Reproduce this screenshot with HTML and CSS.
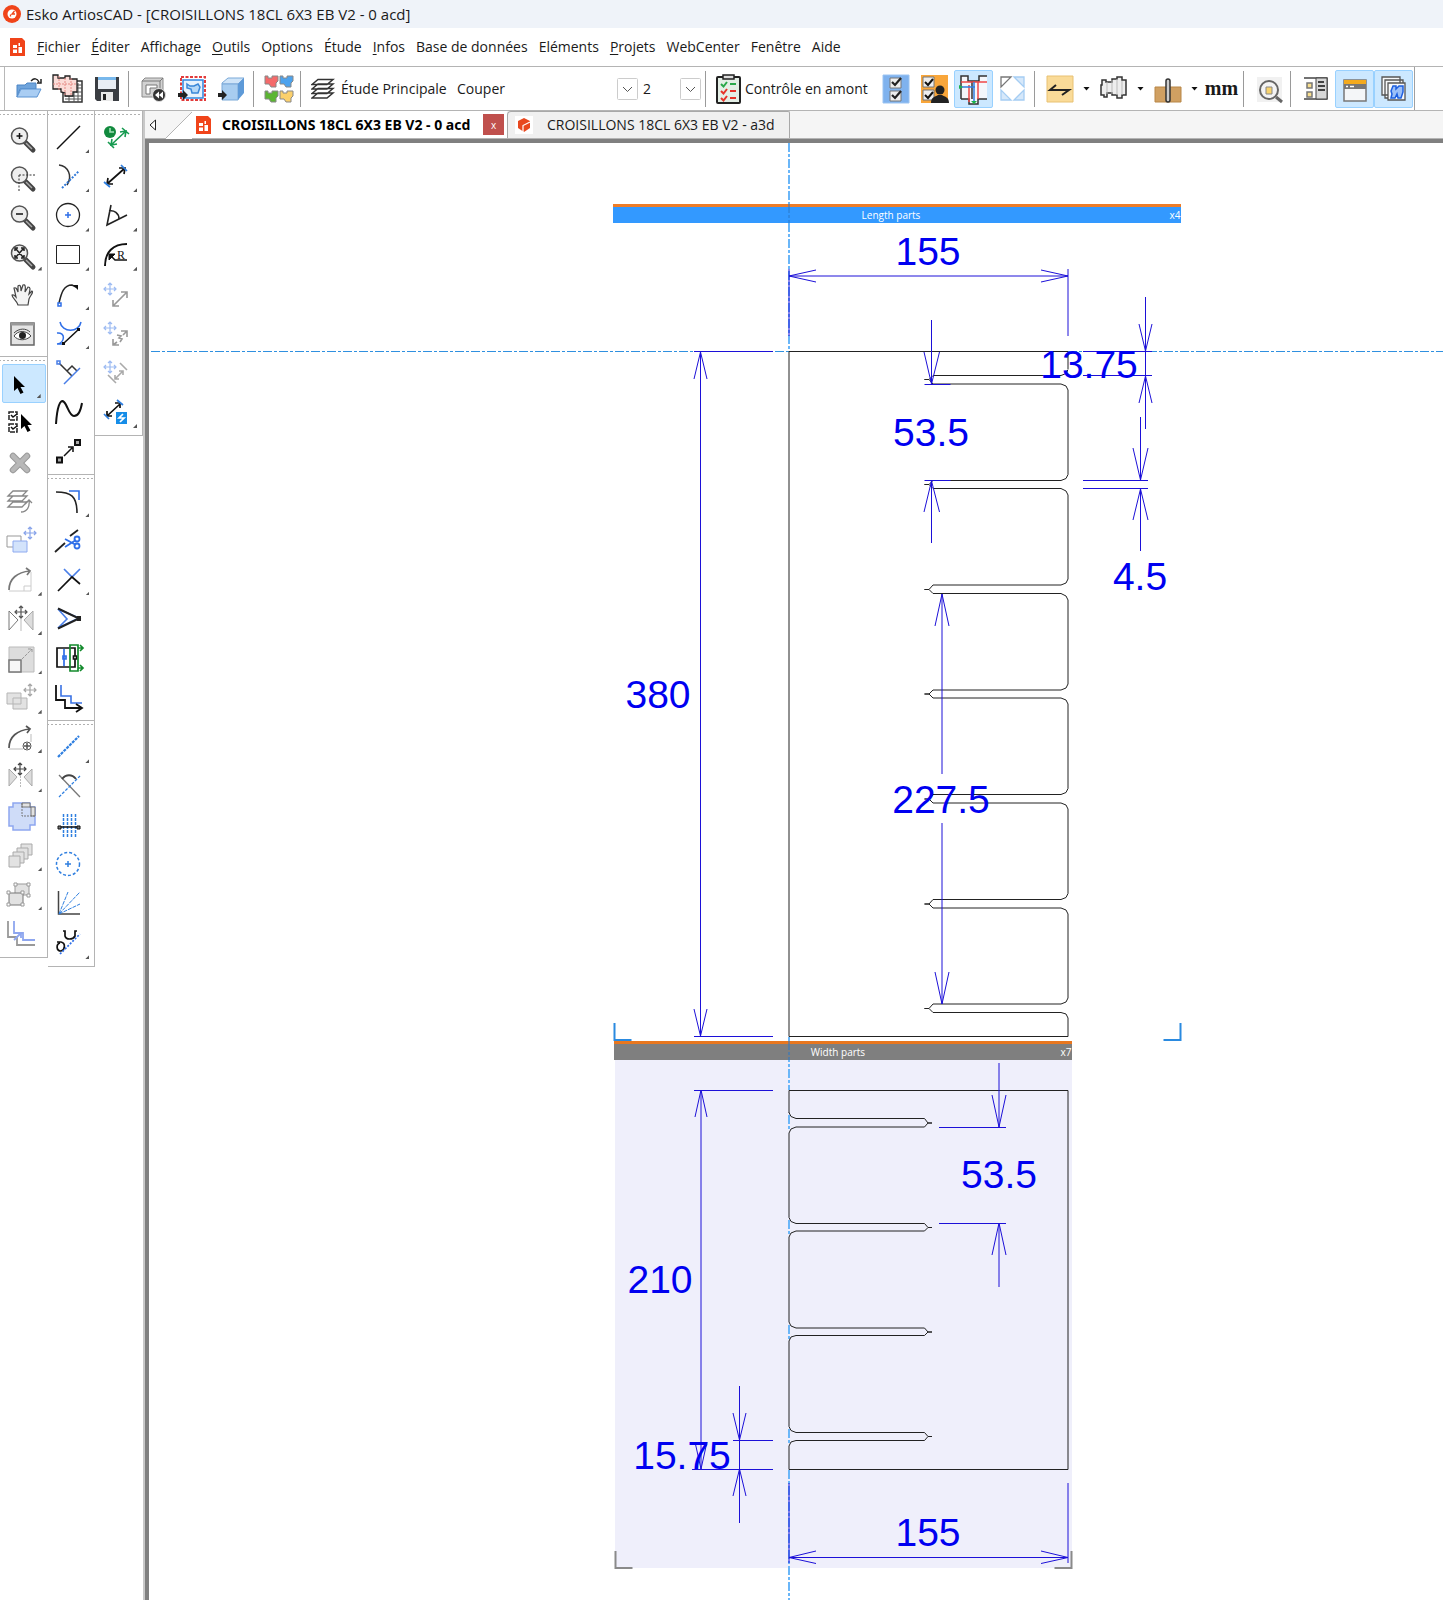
FILE: index.html
```html
<!DOCTYPE html>
<html lang="fr">
<head>
<meta charset="utf-8">
<meta name="viewport" content="width=device-width, initial-scale=1">
<title>Esko ArtiosCAD - [CROISILLONS 18CL 6X3 EB V2 - 0 acd]</title>
<link rel="stylesheet" href="styles.css">
</head>
<body>
<svg class="defs" aria-hidden="true">
  <defs>
    <g id="lens"><path d="M20 20l8 8" stroke="#444" stroke-width="5" stroke-linecap="round"/><path d="M21 21l6 6" stroke="#aaa" stroke-width="1.5"/><circle cx="14.500" cy="14" r="8" fill="#eee" stroke="#555" stroke-width="1.5"/></g>
    <g id="move" fill="none" stroke="currentColor" stroke-width="1.200"><path d="M-6 0H6M0-6V6M-4-2l-2 2 2 2M4-2l2 2-2 2M-2-4l2-2 2 2M-2 4l2 2 2-2"/></g>
    <path id="pointer" d="M0 0v15l3.500-3 3 6 3-1.500-3-5.500H11z" fill="#000"/>
    <g id="doc"><path d="M0 0h12l3 3v15H0z" fill="#f0441a"/><path d="M3 7h4v3H3zM3 11.500h4v3.500H3zM8.500 9H12v6H8.500zM8.500 5H10v3H8.500z" fill="#fff"/></g>
    <path id="piece" d="M0 0h3v2h4V0h6v5l-2 2v4H6L4 8H0z"/>
  </defs>
</svg>

<header class="titlebar">
  <svg class="logo" viewBox="0 0 18 18" aria-hidden="true"><circle cx="9" cy="9" r="9" fill="#f0441a"/><circle cx="9" cy="9" r="4.500" fill="#fff"/><path d="M11.500 6L9 9h3M7.500 9.500v2" stroke="#f0441a" stroke-width="1.300" fill="none"/></svg>
  <h1>Esko ArtiosCAD - [CROISILLONS 18CL 6X3 EB V2 - 0 acd]</h1>
</header>

<nav class="menu">
  <svg class="docicon" viewBox="0 0 15 18" aria-hidden="true"><use href="#doc"/></svg>
  <button><u>F</u>ichier</button><button><u>É</u>diter</button><button>Affichage</button><button><u>O</u>utils</button><button>Options</button><button>Étude</button><button><u>I</u>nfos</button><button>Base de données</button><button>Eléments</button><button><u>P</u>rojets</button><button>WebCenter</button><button>Fenêtre</button><button>Aide</button>
</nav>

<div class="toolbar-row"><div class="toolbar">
  <button class="tb" aria-label="Ouvrir"><svg viewBox="0 0 32 32"><path d="M4 12h8l2-2h9v6H7L4 24z" fill="#6fa4dc" stroke="#4c86c6"/><path d="M8 16h20l-4 8H4z" fill="#a9cdf3" stroke="#5b93d2"/><path d="M18 8c3-3 6-3 8 1m2-3v4h-4" fill="none" stroke="#222" stroke-width="1.500"/></svg></button>
  <button class="tb" aria-label="Modèle"><svg viewBox="0 0 32 32"><path d="M11 8h19v21H11z" fill="#fff" stroke="#333" stroke-width="1.500"/><path d="M13 23h17M13 26h17M17 10v19M22 10v19M26 10v19M24 12h6M24 15h6M24 19h6" stroke="#555"/><path d="M1 6V2h5v3h7V3h5v3h7v13h-4v4h-8v-3l-4-1v-3H1z" fill="#fbdcd8" stroke="#222" stroke-width="1.300"/><path d="M1 11h24M7 3v15M13 5v17M19 5v17" stroke="#e58a84" stroke-dasharray="2 1"/></svg></button>
  <button class="tb" aria-label="Enregistrer"><svg viewBox="0 0 32 32"><path d="M4 4h24v24H6l-2-2z" fill="#3a3d42"/><path d="M7 4h18v12H7z" fill="#e9eef4"/><path d="M7 4h18v3H7z" fill="#78b8ec"/><path d="M10 19h12v9H10z" fill="#e9e9e9"/><path d="M12 21h3v6h-3z" fill="#222"/></svg></button>
  <i class="sep"></i>
  <button class="tb" aria-label="Reconstruire"><svg viewBox="0 0 32 32"><path d="M4 8l3-3h18v16l-3 3H4z" fill="#d2d2d2" stroke="#8b8b8b"/><path d="M4 8h18v16M22 8l3-3" fill="none" stroke="#777"/><path d="M8 12h11v3H12v6H8z" fill="#fff" stroke="#777"/><circle cx="21" cy="22" r="6.500" fill="#333" stroke="#ddd"/><path d="M21 18.500v7l-4-3.500zM25 18.500v7l-4-3.500z" fill="#fff"/></svg></button>
  <button class="tb" aria-label="Vers le plan"><svg viewBox="0 0 32 32"><path d="M4 4h24v23H4z" fill="#fff" stroke="#e23b3b" stroke-width="2" stroke-dasharray="3 1.500"/><path d="M6 7h20v18H6z" fill="#e8f2fd" stroke="#2f86e0" stroke-width="1.500"/><path d="M10 11l3 2h4l4-2 2 3-2 6h-6l-1-4-4-1z" fill="#b5d7f7" stroke="#3a87d8" stroke-width="1.500"/><path d="M1 20h5v-3l5 5-5 5v-3H1z" fill="#222"/></svg></button>
  <button class="tb" aria-label="Vers la 3D"><svg viewBox="0 0 32 32"><path d="M6 10l6-5h16l-6 6H6z" fill="#cfe4f8" stroke="#7aa9d8"/><path d="M6 11h16v16H6z" fill="#a8cdf0" stroke="#7aa9d8"/><path d="M22 11l6-6v15l-6 7z" fill="#5e9ad8"/><path d="M2 20h4v-3l5 5-5 5v-3H2z" fill="#222"/></svg></button>
  <i class="sep"></i>
  <button class="tb" aria-label="Pièces"><svg viewBox="0 0 32 32" stroke="#888" stroke-width="1"><use href="#piece" x="2" y="3" fill="#f46a6a"/><use href="#piece" x="17" y="3" fill="#4da3ee"/><use href="#piece" x="2" y="18" fill="#5bb532"/><use href="#piece" x="17" y="18" fill="#fbd06c"/></svg></button>
  <i class="sep"></i>
  <button class="tbtext study"><svg viewBox="0 0 24 24" fill="#fff" stroke="#333" stroke-width="1.500"><path d="M1 21l6-5h15l-6 5zM1 16.500l6-5h15l-6 5zM1 12l6-5h15l-6 5zM1 7.500l6-5h15l-6 5z"/></svg>Étude Principale</button>
  <select class="combo kind" aria-label="Type de trait"><option>Couper</option></select>
  <select class="combo weight" aria-label="Épaisseur"><option>2</option></select>
  <i class="sep"></i>
  <button class="tbtext check"><svg viewBox="0 0 25 32"><rect x="1" y="4" width="23" height="26" rx="1" fill="#e4efe6" stroke="#222" stroke-width="2"/><path d="M7 2h11v4H7z" fill="#ddd" stroke="#222" stroke-width="1.500"/><path d="M5 11l2.500 2.500L11 9M14 11h6" fill="none" stroke="#2aa84a" stroke-width="2"/><path d="M5 18l2.500 2.500L11 16M14 18h6M5 25l2.500 2.500L11 23M14 25h6" fill="none" stroke="#e63329" stroke-width="2"/></svg>Contrôle en amont</button>
  <button class="tb" aria-label="Vérifications"><svg viewBox="0 0 32 32"><path d="M3 2h26v28H3z" fill="#7fb2ee" stroke="#9cc4f2"/><path d="M10 5h11v10H10zM10 18h11v10H10z" fill="#eee" stroke="#777"/><path d="M12 9l3 3 6-7M12 22l3 3 6-7" fill="none" stroke="#222" stroke-width="2.200"/></svg></button>
  <button class="tb" aria-label="Vérifications utilisateur"><svg viewBox="0 0 32 32"><path d="M2 2h27v28H2z" fill="#f9a63a"/><path d="M4 4h11v10H4zM4 17h11v10H4z" fill="#eee" stroke="#777"/><path d="M6 9l3 3 5-6M6 22l3 3 5-6" fill="none" stroke="#111" stroke-width="2"/><circle cx="21" cy="17" r="4.500" fill="#222"/><path d="M12 30c0-6 4-6 7-8h4c3 2 7 2 7 8z" fill="#222"/></svg></button>
  <button class="tb on" aria-label="Plan"><svg viewBox="0 0 32 32" fill="none"><path d="M3 3h7v5h11V3h8v23h-8v5h-9v-5H3z" fill="#f4f7fb"/><path d="M3 26V3h7v5h11V3h8M3 26h8v5h9v-5h9M14 8v18" stroke="#333" stroke-width="1.500"/><path d="M3 9h26M11 12v17M20 9v17" stroke="#ee4848" stroke-width="1.500"/><path d="M3 14h14M16 9v20" stroke="#2f7fe0" stroke-width="1.500"/><path d="M1 12l4 2-4 2zM13 28h6l-3 3z" fill="#19b24b"/></svg></button>
  <button class="tb" aria-label="Ajuster"><svg viewBox="0 0 32 32" stroke-width="1.300"><path d="M4 4h10L4 14z" fill="#fff" stroke="#777"/><path d="M17 4h10v10zM4 17v10h10zM27 17v10H17z" fill="#d6e8fa" stroke="#a5cdf3"/></svg></button>
  <i class="sep"></i>
  <button class="tb" aria-label="Sens"><svg viewBox="0 0 32 32"><path d="M3 3h26v26H3z" fill="#fadb98" stroke="#e8c172"/><path d="M12 12l-6 5h19l-7 5" fill="none" stroke="#222" stroke-width="2"/></svg></button><i class="drop"></i>
  <button class="tb" aria-label="Forme"><svg viewBox="0 0 32 32"><path d="M4 7h4v2h6V6h5V4h5v3h4v15h-4v3h-5v-3h-5v-2H9v4H6v-2H3V12h1z" fill="#eee" stroke="#333" stroke-width="1.500"/><path d="M9 9v12M14 7v14M19 6v16M24 8v14" stroke="#bbb"/></svg></button><i class="drop"></i>
  <button class="tb" aria-label="Règle"><svg viewBox="0 0 32 32"><path d="M3 14h26v15H3z" fill="#d0a062" stroke="#b88647"/><rect x="14" y="6" width="4" height="23" rx="2" fill="#ccc" stroke="#333" stroke-width="1.500"/></svg></button><i class="drop"></i>
  <button class="tb units">mm</button>
  <i class="sep"></i>
  <button class="tb" aria-label="Zoom objet"><svg viewBox="0 0 32 32"><path d="M4 4h25v25H4z" fill="#f1f1f1"/><path d="M23 24l6 5" stroke="#666" stroke-width="3"/><circle cx="16" cy="17" r="9" fill="#f4f4f4" stroke="#666" stroke-width="2"/><path d="M13 14h6v7h-6z" fill="#f8d36e" stroke="#888"/></svg></button>
  <i class="sep"></i>
  <button class="tb" aria-label="Panneau"><svg viewBox="0 0 32 32"><path d="M4 5h23v21H4" fill="#fff" stroke="#444" stroke-width="1.500"/><path d="M16 5h11v21H16z" fill="#d7d7d7" stroke="#444"/><path d="M7 10h5v5H7zM7 19h5v5H7z" fill="#f9df8e" stroke="#777" stroke-width="1.500"/><path d="M18 9h6M18 13h7M18 17h7" stroke="#111" stroke-width="1.700"/></svg></button>
  <button class="tb on" aria-label="Fenêtre"><svg viewBox="0 0 32 32"><path d="M5 7h22v21H5z" fill="#f4f6f8" stroke="#777" stroke-width="1.500"/><path d="M5 7h22v4H5z" fill="#f3aa1e"/><path d="M5 11h22v5H5z" fill="#777"/><path d="M7 13.500h2M11 13.500h4" stroke="#fff" stroke-width="1.500"/></svg></button>
  <button class="tb on" aria-label="Calques"><svg viewBox="0 0 32 32" fill="#f7f9fb" stroke="#555" stroke-width="1.300"><path d="M4 4h18v18H4zM7 7h18v18H7z"/><path d="M10 10h17v17H10z"/><path d="M13 18l2-5h3v3l3-3h4v6l-2 6h-3l-1-4-2 4h-4l1-4z" fill="#9cc0f8" stroke="#1d5fe0" stroke-width="1.500"/></svg></button>
</div></div>

<div class="workspace">
  <aside class="palettes">
    <div class="palette">
      <div class="group g6">
        <button aria-label="Zoom avant"><svg viewBox="0 0 32 32"><use href="#lens"/><path d="M11.500 14h6M14.500 11v6" stroke="#111" stroke-width="1.500"/></svg></button>
        <button aria-label="Zoom fenêtre"><svg viewBox="0 0 32 32"><use href="#lens"/><path d="M14 14h17M14 14v17" stroke="#333" stroke-dasharray="2 1.500"/></svg></button>
        <button aria-label="Zoom arrière"><svg viewBox="0 0 32 32"><use href="#lens"/><path d="M11 14h7" stroke="#111" stroke-width="1.500"/></svg></button>
        <button class="more" aria-label="Zoom étendu"><svg viewBox="0 0 32 32"><use href="#lens"/><path d="M11 10l7 8M18 10l-7 8M10 12v-3h3M16 9h3v3M10 16v3h3M16 19h3v-3" fill="none" stroke="#222" stroke-width="1.500"/></svg></button>
        <button aria-label="Main"><svg viewBox="0 0 32 32"><path d="M13 27c-1-4-6-7-6-10 2-1 3 1 4 2L9 10c2-1 3 1 4 4l0-6c2-2 3 0 3 5l2-6c2-1 3 1 2 7l3-5c3 0 2 3 1 7l3-3c2 1-2 5-3 8l-1 6z" fill="#f4f4f4" stroke="#444" stroke-width="1.200"/></svg></button>
        <button aria-label="Aperçu"><svg viewBox="0 0 32 32"><path d="M6 6h23v22H6z" fill="#e4e4e4" stroke="#666" stroke-width="1.500"/><path d="M6 7h23" stroke="#999" stroke-width="3"/><path d="M9 19c4-6 12-6 17 0-5 5-13 5-17 0z" fill="#fff" stroke="#444"/><path d="M9 16c5-5 12-5 16-1" fill="none" stroke="#444"/><circle cx="17.500" cy="18.500" r="3.500" fill="#222"/></svg></button>
      </div>
      <div class="group g15">
        <button class="more on" aria-label="Sélection"><svg viewBox="0 0 32 32"><use href="#pointer" x="9" y="8"/></svg></button>
        <button aria-label="Sélection multiple"><svg viewBox="0 0 32 32"><path d="M4 5h8v8H4zM4 17h8v8H4z" fill="#fff" stroke="#222" stroke-width="1.500" stroke-dasharray="5 1"/><path d="M6 8l2 2 4-3M6 20l2 2 4-3" fill="none" stroke="#111" stroke-width="1.500"/><use href="#pointer" x="16" y="7"/></svg></button>
        <button aria-label="Supprimer"><svg viewBox="0 0 32 32"><path d="M8 10l14 14M22 10L8 24" stroke="#999" stroke-width="6.500" stroke-linecap="round"/><path d="M8 10l14 14M22 10L8 24" stroke="#b8b8b8" stroke-width="4.500" stroke-linecap="round"/></svg></button>
        <button aria-label="Calque"><svg viewBox="0 0 32 32" fill="#fff" stroke="#888" stroke-width="1.300"><path d="M3 21l5-5h14l-5 5zM3 15l5-5h14l-5 5zM3 10l5-5h14l-5 5z"/><path d="M16 26c6 0 9-5 8-12m-4 4l4-4 3 3" fill="none"/></svg></button>
        <button aria-label="Déplacer"><svg viewBox="0 0 32 32"><path d="M2 11h14v11H2z" fill="#fff" stroke="#999"/><path d="M8 16h14v11H8z" fill="#d3e3fb" stroke="#8eaaf0"/><g color="#88a4ea"><use href="#move" x="25" y="8"/></g></svg></button>
        <button class="more" aria-label="Pivoter"><svg viewBox="0 0 32 32" fill="none"><path d="M4 27h22V8M19 27v-5h7" stroke="#ccc"/><path d="M4 26C4 15 12 8 25 7m-4-3l4 3-3 4" stroke="#777" stroke-width="1.700"/></svg></button>
        <button class="more" aria-label="Miroir"><svg viewBox="0 0 32 32"><path d="M4 7v19l9-10z" fill="#fff" stroke="#777"/><path d="M28 7v19l-9-10z" fill="#ddd" stroke="#aaa"/><path d="M16 14v13" stroke="#bbb"/><g color="#555"><use href="#move" x="16" y="8"/></g></svg></button>
        <button class="more" aria-label="Échelle"><svg viewBox="0 0 32 32"><path d="M4 4h25v25H4z" fill="#ddd" stroke="#bbb"/><path d="M4 17h12v12H4z" fill="#f7f7f7" stroke="#777" stroke-width="1.500"/><path d="M17 16L27 6m-4 0h4v4" fill="none" stroke="#999" stroke-dasharray="3 1"/></svg></button>
        <button class="more" aria-label="Copier déplacer"><svg viewBox="0 0 32 32" fill="#e2e2e2" stroke="#b5b5b5"><path d="M2 11h14v11H2zM8 16h14v11H8z"/><g color="#a5a5a5"><use href="#move" x="25" y="8"/></g></svg></button>
        <button class="more" aria-label="Copier pivoter"><svg viewBox="0 0 32 32" fill="none"><path d="M4 27h14M26 12v8" stroke="#bbb"/><path d="M4 26C4 15 12 8 25 7m-4-3l4 3-3 4" stroke="#555" stroke-width="1.700"/><circle cx="22" cy="24" r="4" stroke="#555"/><path d="M19 24h6M22 21v6" stroke="#555" stroke-width="1.500"/></svg></button>
        <button class="more" aria-label="Copier miroir"><svg viewBox="0 0 32 32"><path d="M4 8v17l8-9zM27 8v17l-8-9z" fill="#ddd" stroke="#aaa"/><path d="M15.500 15v11" stroke="#bbb" stroke-dasharray="2 1"/><g color="#444"><use href="#move" x="15" y="8"/></g></svg></button>
        <button aria-label="Contour"><svg viewBox="0 0 32 32"><path d="M8 3h17v4h5v18h-5v5H8v-4H4V7h4z" fill="#cfdcf8" stroke="#8ea6ef" stroke-width="1.500"/><path d="M17 3h8v4h5v9h-4V7h-9z" fill="#e2e2e2" stroke="#777"/><path d="M17 3v13h13" fill="none" stroke="#777" stroke-dasharray="2 1"/></svg></button>
        <button class="more" aria-label="Séquence"><svg viewBox="0 0 32 32" fill="#e2e2e2" stroke="#aaa"><path d="M16 4h11v11H16z"/><path d="M12 8h11v11H12z"/><path d="M8 12h11v11H8z"/><path d="M4 16h11v11H4z"/></svg></button>
        <button class="more" aria-label="Grouper"><svg viewBox="0 0 32 32" fill="#e2e2e2" stroke="#999"><path d="M10 5h14v11H10z"/><path d="M4 14h14v12H4z" stroke="#777"/><path d="M9 4h3v3H9zM22 4h3v3h-3zM22 15h3v3h-3zM2 12h3v3H2zM16 12h3v3h-3zM2 24h3v3H2zM16 24h3v3h-3z" fill="#fff"/></svg></button>
        <button aria-label="Décaler contour"><svg viewBox="0 0 32 32" fill="none" stroke-width="1.800"><path d="M3 3v16h9v8h18" stroke="#999"/><path d="M9 3v12h9v7h12M9 22l7-7m-5 0h5v5" stroke="#8ea6ef"/></svg></button>
      </div>
    </div>

    <div class="palette">
      <div class="group g9">
        <button class="more" aria-label="Ligne"><svg viewBox="0 0 32 32"><path d="M4 27L27 4" stroke="#111" stroke-width="1.500"/></svg></button>
        <button class="more" aria-label="Arc"><svg viewBox="0 0 32 32" fill="none" stroke-width="1.500"><path d="M6 4c9 1 14 11 8 20" stroke="#333"/><path d="M9 27L26 10" stroke="#2f78d8" stroke-width="2" stroke-dasharray="2 1.500"/></svg></button>
        <button class="more" aria-label="Cercle"><svg viewBox="0 0 32 32" fill="none"><circle cx="15" cy="15" r="11.500" stroke="#222" stroke-width="1.300"/><path d="M12 15h6M15 12v6" stroke="#2f6fe8" stroke-width="1.500"/></svg></button>
        <button aria-label="Rectangle" class="more"><svg viewBox="0 0 32 32"><path d="M3.500 6.500h23v18h-23z" fill="#fff" stroke="#222"/></svg></button>
        <button class="more" aria-label="Courbe"><svg viewBox="0 0 32 32" fill="none"><path d="M6 24c2-8 4-18 13-18l4 2" stroke="#222" stroke-width="1.500"/><path d="M20 6h5v5z" fill="#111"/><path d="M5 24h3v3H5z" stroke="#2f6fe8" stroke-width="1.500"/></svg></button>
        <button class="more" aria-label="Tangente"><svg viewBox="0 0 32 32" fill="none"><path d="M7 4c2 11 19 11 21 0M4 15c9-1 8 10 0 11M4 26h6" stroke="#2f6fe8" stroke-width="1.500"/><path d="M11 25l15-14" stroke="#111" stroke-width="1.500"/><path d="M9 24h3v3H9zM24 10h3v3h-3z" fill="#111"/></svg></button>
        <button aria-label="Perpendiculaire"><svg viewBox="0 0 32 32" fill="none" stroke-width="1.500"><path d="M6 6l13 13M14 14l5-5 5 5" stroke="#333"/><path d="M11 27l16-16M4 4h3v3H4z" stroke="#4a7fe8"/></svg></button>
        <button aria-label="Bézier"><svg viewBox="0 0 32 32"><path d="M3 28C4 12 7 2 11 6c4 4 5 14 10 14 5 0 7-7 8-13" fill="none" stroke="#111" stroke-width="2"/></svg></button>
        <button aria-label="Extension"><svg viewBox="0 0 32 32" fill="none" stroke="#111" stroke-width="2"><path d="M4 21.500h5v5H4zM22 4h5v5h-5z" fill="#aaa"/><path d="M11 20l8-8m-4-1h5v5" stroke-width="1.500"/></svg></button>
      </div>
      <div class="group g6">
        <button class="more" aria-label="Congé"><svg viewBox="0 0 32 32" fill="none" stroke-width="1.600"><path d="M3 6c15 0 21 4 21 21" stroke="#222"/><path d="M16 5h10v9" stroke="#2f6fe8"/></svg></button>
        <button aria-label="Couper ligne"><svg viewBox="0 0 32 32" fill="none" stroke-width="1.800"><path d="M2 27l10-9M17 11l8-6" stroke="#222"/><path d="M12 14l11 6M12 22l11-7" stroke="#2f6fe8"/><circle cx="24" cy="14" r="2.500" stroke="#2f6fe8"/><circle cx="24" cy="21" r="2.500" stroke="#2f6fe8"/></svg></button>
        <button class="more" aria-label="Intersection"><svg viewBox="0 0 32 32" fill="none" stroke-width="1.700"><path d="M11 5l8 8 8-8" stroke="#4a7fe8"/><path d="M5 27l14-14 8 7" stroke="#111"/></svg></button>
        <button aria-label="Joindre"><svg viewBox="0 0 32 32" fill="none" stroke-width="1.600"><path d="M5 6l9 10-9 9 21-10z" stroke="#4a7fe8"/><path d="M5 5.500L26 15.500 5 25.500" stroke="#222" stroke-width="2"/><path d="M24 13h4v5h-4z" fill="#222"/></svg></button>
        <button aria-label="Étirer"><svg viewBox="0 0 32 32" fill="none" stroke-width="1.700"><path d="M4 6h18v19H4z" stroke="#111"/><path d="M11 7v17M10 14h3v3h-3z" stroke="#2f6fe8"/><path d="M20.500 14h3v3h-3z" fill="#fff" stroke="#111"/><path d="M17 3h8v26h-8zM25 6h5m-3-3l3 3-3 3M25 26h5m-3-3l3 3-3 3" stroke="#138a2c"/></svg></button>
        <button aria-label="Décaler"><svg viewBox="0 0 32 32" fill="none" stroke-width="1.600"><path d="M8 4v11h10v7h11" stroke="#3a72e4"/><path d="M3 4v15h9v8h17m-6-4l6 4-6 4" stroke="#111" stroke-width="1.800"/></svg></button>
      </div>
      <div class="group g6">
        <button class="more" aria-label="Ligne de construction"><svg viewBox="0 0 32 32"><path d="M5 25L26 4" stroke="#2f7fe0" stroke-width="2.200" stroke-dasharray="3 1"/></svg></button>
        <button aria-label="Bissectrice"><svg viewBox="0 0 32 32" fill="none" stroke-width="1.300"><path d="M6 4l21 22" stroke="#777"/><path d="M6 26L27 5" stroke="#2f7fe0" stroke-dasharray="3 1.500"/><path d="M9 8c4-5 10-5 14 0" stroke="#444" stroke-width="1.800"/></svg></button>
        <button aria-label="Division"><svg viewBox="0 0 32 32" fill="none"><path d="M10.500 4v24M14.500 4v24M18.500 4v24M22.500 4v24" stroke="#2f7fe0" stroke-width="1.500" stroke-dasharray="3 1"/><path d="M6 17h20" stroke="#111" stroke-width="1.500"/><path d="M5 16h3v3H5zM24 16h3v3h-3z" fill="#777" stroke="#111"/></svg></button>
        <button aria-label="Cercle de construction"><svg viewBox="0 0 32 32" fill="none" stroke="#2f7fe0" stroke-width="1.500"><circle cx="15" cy="15" r="11.500" stroke-dasharray="3 2"/><path d="M12 15h6M15 12v6"/></svg></button>
        <button aria-label="Angles"><svg viewBox="0 0 32 32" fill="none"><path d="M5.500 3v23H27" stroke="#444" stroke-width="1.500"/><path d="M6 26L27 4M6 26l9-22M6 26l21-10" stroke="#2f7fe0" stroke-dasharray="4 1"/></svg></button>
        <button class="more" aria-label="Tangente de construction"><svg viewBox="0 0 32 32" fill="none"><path d="M10 4h2v5c1 4 8 4 10 0V4h2M4 15h4c5 1 4 8 0 9-5 0-5-7-1-8" stroke="#111" stroke-width="1.700"/><path d="M7 27L27 7" stroke="#2f6fe8" stroke-width="1.700" stroke-dasharray="2 1.500"/></svg></button>
      </div>
    </div>

    <div class="palette">
      <div class="group g8">
        <button aria-label="Cote automatique"><svg viewBox="0 0 32 32" fill="none" stroke="#169a50" stroke-width="1.600"><circle cx="10" cy="10" r="6" fill="#128a3e" stroke="none"/><path d="M10 6v4h4" stroke="#9fe0b5"/><path d="M11 23L26 9m-6 1l6-1-1 6M12 17l-1 6 6-1M8 20l6 6M22 6l7 6"/></svg></button>
        <button class="more" aria-label="Cote"><svg viewBox="0 0 32 32" fill="none" stroke-width="1.700"><path d="M7 23L25 7m-6 0l6 0-1 6M8 17l-1 6h6" stroke="#111"/><path d="M4 21l6 5M21 4l6 6" stroke="#2f7fe0"/></svg></button>
        <button class="more" aria-label="Angle"><svg viewBox="0 0 32 32" fill="none" stroke="#222" stroke-width="1.600"><path d="M11 5L7 25l20-10M9 11c5-1 10 2 10 8"/></svg></button>
        <button class="more" aria-label="Rayon"><svg viewBox="0 0 32 32" fill="none" stroke="#111"><path d="M5 27C5 13 13 5 27 5" stroke-width="2"/><path d="M10 16l5 5h12" stroke-width="1.500"/><path d="M9 15h6l-6 6z" fill="#111"/><text x="17" y="20" class="radius">R</text></svg></button>
        <button aria-label="Déplacer cote"><svg viewBox="0 0 32 32" fill="none" stroke="#999" stroke-width="1.600"><g color="#9dbbf2"><use href="#move" x="10" y="10"/></g><path d="M13 27l14-14m-6 0h6v6M13 21v6h6"/></svg></button>
        <button aria-label="Déplacer texte"><svg viewBox="0 0 32 32" fill="none" stroke="#999" stroke-width="1.600"><g color="#9dbbf2"><use href="#move" x="10" y="10"/></g><path d="M13 27l4-3M23 17l4-4m-6 0h6v6M13 21v6h6M17 17l4 1-2 2 3 1-2 3"/></svg></button>
        <button aria-label="Déplacer attache"><svg viewBox="0 0 32 32" fill="none" stroke="#aaa" stroke-width="1.600"><g color="#9dbbf2"><use href="#move" x="10" y="10"/></g><path d="M15 22l8-8m-4 0h4v4M15 18v4h4M8 18l8 8M20 6l7 7"/></svg></button>
        <button class="more" aria-label="Cote rapide"><svg viewBox="0 0 32 32" fill="none" stroke-width="1.700"><path d="M7 20L20 8m-5-1h5v5M7 15v5h5" stroke="#111"/><path d="M4 18l5 5M17 4l6 5" stroke="#2f7fe0"/><path d="M16 16h11v12H16z" fill="#168de8"/><path d="M23 18l-4 4h5l-4 4" stroke="#fff"/></svg></button>
      </div>
    </div>
  </aside>

  <main class="document">
    <div class="tabs">
      <button class="scroll" aria-label="Onglets précédents"><svg viewBox="0 0 8 12"><path d="M6.500 1v10L1 6z" fill="#fff" stroke="#222"/></svg></button>
      <svg class="slant" viewBox="0 0 26 28" aria-hidden="true"><path d="M0 27L26 1v27H0z" fill="#fff"/><path d="M0 27L26 1" stroke="#b5b5b5" fill="none"/></svg>
      <div class="tab active"><svg class="docicon" viewBox="0 0 15 18" aria-hidden="true"><use href="#doc"/></svg><a href="#plan">CROISILLONS 18CL 6X3 EB V2 - 0 acd</a><button class="close" aria-label="Fermer">x</button></div>
      <div class="tab other"><svg class="cube" viewBox="0 0 18 18" aria-hidden="true"><path d="M0 0h18v18H0z" fill="#fff"/><path d="M9 2l6 3v7l-6 4-6-4V5z" fill="#e8481f"/><path d="M8 17V9.500l7-3.500" fill="none" stroke="#fff" stroke-width="1.200"/></svg><a href="#a3d">CROISILLONS 18CL 6X3 EB V2 - a3d</a></div>
    </div>
    <div class="canvas" id="plan">
      <svg class="drawing" role="img" aria-label="Plan des croisillons">
        <g transform="translate(-149 -143)">
          <rect class="panel" x="615" y="1060" width="457" height="508"/>
          <path class="axis" d="M151 351.500H789M1068 351.500H4000"/>
          <path class="axis vertical" d="M789 143V351M789 1037V1090M789 1115V1131M789 1220V1235M789 1325V1339M789 1429V1444M789 1470V4000"/>

          <rect x="613" y="204" width="568" height="19" fill="#3399ff"/>
          <rect x="613" y="204" width="568" height="3" fill="#ef7d28"/>
          <rect x="614" y="1041" width="458" height="19" fill="#7f7f7f"/>
          <rect x="614" y="1041" width="458" height="3" fill="#e8771f"/>
          <path class="axis over" d="M789 204v19M789 1041v19"/>
          <g class="caption"><text x="891" y="219">Length parts</text><text x="1175" y="219">x4</text><text x="838" y="1056">Width parts</text><text x="1066" y="1056">x7</text></g>

          <path class="corner blue" d="M614.500 1023v17h17M1180.500 1023v17h-17"/>
          <path class="corner grey" d="M615.500 1551v17h17M1071.500 1551v17h-17"/>

          <path class="part" d="M1068 369V351.500H789V1036.500H1068V1018l-2-4-5-1.500H933l-4-4H924.500h4.500l4-4.500H1061l5-2 2-4V914l-2-4-5-2H933l-4-4H924.500h4.500l4-4.500H1061l5-2 2-4V809l-2-4-5-2H933l-4-4H924.500h4.500l4-4.500H1061l5-2 2-4V704l-2-4-5-2H933l-4-4H924.500h4.500l4-4H1061l5-2 2-4V600l-2-4-5-2.500H933l-4-4H924.500h4.500l4-4.500H1061l5-2 2-4V495l-2-4-5-2.500H933l-4-4H924.500h4.500l4-4H1061l5-2 2-4V390l-2-4-5-2H933l-4-4.500H924.500h4.500l4-4H1061l5-2 2-4"/>
          <path class="part" d="M789 1113V1090.500H1068V1469.500H789V1446l2-4 5-1.500H924.500l3.500-4H932h-4l-3.500-4H796l-5-2-2-4V1341l2-4 5-1.500H924.500l3.500-3.500H932h-4l-3.500-4H796l-5-2-2-4V1237l2-4 5-2H924.500l3.500-3.500H932h-4l-3.500-4H796l-5-2-2-4V1133l2-4 5-2H924.500l3.500-4H932h-4l-3.500-4.500H796l-5-2-2-4"/>

          <g class="dim">
            <path d="M789 276H1068M789 269v67M1068 269v67M816 270l-27 6 27 6M1041 270l27 6-27 6"/>
            <path d="M700.500 351.500V1036.500M694 351.500h79M694 1036.500h79M694 379l6.500-27 6.500 27M694 1009l6.500 27 6.500-27"/>
            <path d="M1145.500 297V429M1083 351.500h69M1083 375.500h69M1139 324l6.500 27 6.500-27M1139 403l6.500-27 6.500 27"/>
            <path d="M931.500 320V384M924.500 384.500h26M924 352l7.500 32 8-32M931.500 480V543M924.500 480.500h26M924 512l7.500-31 8 31"/>
            <path d="M1140.500 417V480M1140.500 488V551M1083 480.500h65M1083 488.500h65M1133 448l7.500 32 7.500-32M1133 520l7.500-31 7.500 31"/>
            <path d="M942 594V774M942 823V1004M935 626l7-32 7 32M935 972l7 32 7-32"/>
            <path d="M999 1063V1127M939 1127.500h67M939 1223.500h67M992 1095l7 32 7-32M999 1223V1287M992 1255l7-32 7 32"/>
            <path d="M701 1090V1469M694 1090.500h79M692 1469.500h81M695 1117l6-27 6 27M695 1442l6 27 6-27"/>
            <path d="M739.500 1386V1523M733 1440.500h40M733 1413l6.500 27 6.500-27M733 1496l6.500-27 6.500 27"/>
            <path d="M789 1557.500H1068M789 1483v80M1068 1483v80M816 1551l-27 6.500 27 6M1041 1551l27 6.500-27 6"/>
          </g>
          <g class="value">
            <text x="928" y="265">155</text><text x="1089" y="378">13.75</text><text x="931" y="446">53.5</text><text x="1140" y="590">4.5</text><text x="658" y="708">380</text><text x="941" y="813">227.5</text><text x="999" y="1188">53.5</text><text x="660" y="1293">210</text><text x="682" y="1469">15.75</text><text x="928" y="1546">155</text>
          </g>
        </g>
      </svg>
    </div>
  </main>
</div>
</body>
</html>
```
FILE: styles.css
```css
* { box-sizing: border-box; }

body {
  margin: 0;
  min-height: 100vh;
  display: flex;
  flex-direction: column;
  background: #fff;
  color: #1a1a1a;
  font: 14px/20px "Open Sans", "Noto Sans", sans-serif;
}

button, select {
  padding: 0;
  border: 0;
  background: none;
  color: inherit;
  font: inherit;
}

svg { display: block; flex: none; }
.defs { position: absolute; width: 0; height: 0; }

.titlebar {
  display: flex;
  align-items: center;
  gap: 5px;
  height: 28px;
  padding: 0 3px;
  background: #eff3f9;
}
.titlebar h1 { margin: 0; font-size: 15px; font-weight: 400; white-space: nowrap; }
.logo { width: 18px; height: 18px; }

.docicon { width: 15px; height: 18px; }

.menu {
  display: flex;
  align-items: center;
  gap: 11px;
  height: 38px;
  padding-left: 10px;
  white-space: nowrap;
}
.menu .docicon { margin-right: 1px; }
.menu u { text-underline-offset: 2px; }

.toolbar-row {
  border-top: 1px solid #b4b4b4;
  border-bottom: 1px solid #b4b4b4;
}
.toolbar {
  display: flex;
  align-items: center;
  width: max-content;
  height: 43px;
  border-right: 1px solid #a0a0a0;
  padding: 0 1px 0 9px;
  background: linear-gradient(90deg, transparent 4px, #b8b8b8 4px, #b8b8b8 5px, transparent 5px);
}
.tb {
  display: flex;
  justify-content: center;
  align-items: center;
  width: 39px;
  height: 38px;
}
.tb svg { width: 32px; height: 32px; }
.on { background: #cce8ff; border: 1px solid #99d1ff; border-radius: 2px; }
.sep { width: 1px; height: 36px; margin: 0 5px 0 2px; background: #9a9a9a; }
.drop {
  width: 15px;
  height: 4px;
  background: #111;
  clip-path: polygon(4px 0, 11px 0, 50% 100%);
}
.units { font: bold 20px "Liberation Serif", serif; }
.tbtext { display: flex; align-items: center; white-space: nowrap; }
.study { width: 146px; gap: 6px; padding-left: 5px; }
.study svg { width: 24px; height: 24px; }
.check { width: 165px; gap: 4px; padding-left: 5px; }
.check svg { width: 25px; height: 32px; }
.combo {
  appearance: none;
  height: 22px;
  padding-left: 5px;
  background: url("data:image/svg+xml,%3Csvg xmlns='http://www.w3.org/2000/svg' width='21' height='22'%3E%3Crect x='.5' y='.5' width='20' height='21' rx='1' fill='%23fff' stroke='%23ccc'/%3E%3Cpath d='M6 9l4.500 4.500L15 9' fill='none' stroke='%23555'/%3E%3C/svg%3E") right center no-repeat;
}
.kind { width: 186px; }
.weight { width: 63px; margin-right: 2px; }

.workspace { display: flex; flex: 1; }
.palettes { display: flex; align-items: flex-start; width: 143px; flex: none; }
.palette { width: 48px; }
.group {
  display: grid;
  grid-auto-rows: 39px;
  align-content: space-between;
  padding: 7px 1px 3px 0;
  border-right: 1px solid #b4b4b4;
  border-bottom: 1px solid #b4b4b4;
  background: linear-gradient(90deg, #b0b0b0 2px, transparent 2px) 3px 3px / 4px 1px repeat-x;
}
.g6 { height: 246px; }
.g8 { height: 325px; }
.g9 { height: 364px; }
.g15 { height: 601px; }
.group button { position: relative; padding-left: 5px; }
.group svg { width: 32px; height: 32px; }
.group .on { margin-left: 2px; padding-left: 2px; }
.more::after {
  content: "";
  position: absolute;
  right: 4px;
  bottom: 4px;
  width: 4px;
  height: 4px;
  background: #555;
  clip-path: polygon(100% 0, 100% 100%, 0 100%);
}
.radius { font: 12px "Liberation Serif", serif; fill: #111; stroke: none; }

.document { display: flex; flex-direction: column; flex: 1; min-width: 0; border-left: 2px solid #c8c8c8; }
.tabs {
  display: flex;
  height: 28px;
  padding-left: 4px;
  border-bottom: 1px solid #b4b4b4;
  background: #f5f5f5;
  white-space: nowrap;
}
.tabs a { color: inherit; text-decoration: none; }
.scroll { width: 17px; }
.scroll svg { width: 8px; height: 12px; }
.slant { width: 26px; height: 28px; }
.tab { display: flex; align-items: center; }
.active { width: 315px; padding-left: 4px; background: #fff; }
.active a { flex: 1; padding-left: 11px; font-family: "Noto Sans", sans-serif; font-weight: 700; color: #000; }
.close {
  width: 21px;
  height: 21px;
  margin-right: 3px;
  background: #c0504d;
  color: #fff;
  font-size: 10px;
  line-height: 20px;
}
.other {
  width: 283px;
  padding-left: 7px;
  gap: 14px;
  border: 1px solid #a8a8a8;
  border-bottom: 0;
  border-radius: 4px 2px 0 0;
  background: #f0f0f0;
}
.cube { width: 18px; height: 18px; }

.canvas { flex: 1; border-top: 4px solid #808080; border-left: 4px solid #808080; overflow: hidden; }
.drawing { width: 100%; height: 100%; min-height: 1456px; }
.panel { fill: #efeffb; }
.axis { fill: none; stroke: #2f90e0; stroke-width: 1; stroke-dasharray: 9 2 3 2; }
.vertical { stroke: #6ab6f8; stroke-width: 2; }
.over { stroke: #2a78c8; }
.caption { fill: #fff; font: 10px "Open Sans", sans-serif; text-anchor: middle; }
.corner { fill: none; stroke-width: 2; }
.blue { stroke: #2a8ae0; }
.grey { stroke: #8a8a8a; }
.part { fill: none; stroke: #222; stroke-width: 1; }
.dim { fill: none; stroke: #1c10d8; stroke-width: 1; }
.value { fill: #0000f0; font: 39px "Liberation Sans", Arial, sans-serif; text-anchor: middle; }
```
